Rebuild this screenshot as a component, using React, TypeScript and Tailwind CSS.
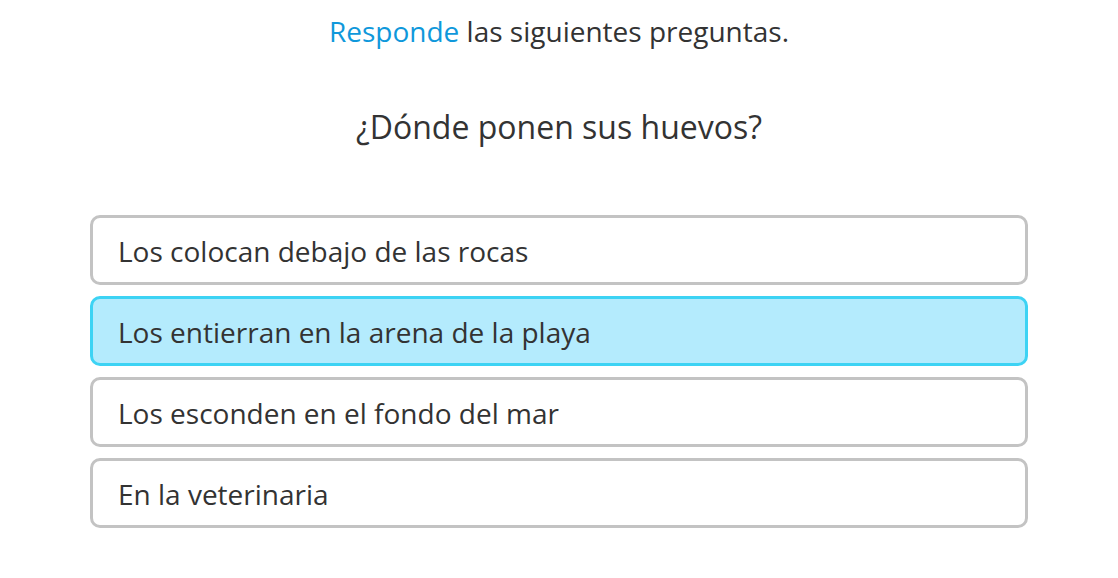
import React from "react";

const options = [
  { text: "Los colocan debajo de las rocas", selected: false },
  { text: "Los entierran en la arena de la playa", selected: true },
  { text: "Los esconden en el fondo del mar", selected: false },
  { text: "En la veterinaria", selected: false },
];

export default function App() {
  return (
    <div
      className="w-[1118px] h-[578px] bg-white text-[#333333] flex flex-col items-center"
      style={{ fontFamily: '"Open Sans", "Noto Sans", sans-serif' }}
    >
      <p className="mt-[11px] text-[28px] leading-[40px] text-center">
        <span className="text-[#0f98db]">Responde</span> las siguientes preguntas.
      </p>
      <h2 className="mt-[53px] text-[32px] leading-[46px] text-center">¿Dónde ponen sus huevos?</h2>
      <div className="mt-[65px] w-[938px] flex flex-col gap-[11px]">
        {options.map((o) => (
          <div
            key={o.text}
            className={
              o.selected
                ? "h-[70px] rounded-[10px] border-[3px] border-[#3dd3f4] bg-[#b4ebfd] flex items-center pl-[25px] pt-[2px] text-[28px]"
                : "h-[70px] rounded-[10px] border-[3px] border-[#c3c3c3] bg-white flex items-center pl-[25px] pt-[2px] text-[28px]"
            }
          >
            {o.text}
          </div>
        ))}
      </div>
    </div>
  );
}
